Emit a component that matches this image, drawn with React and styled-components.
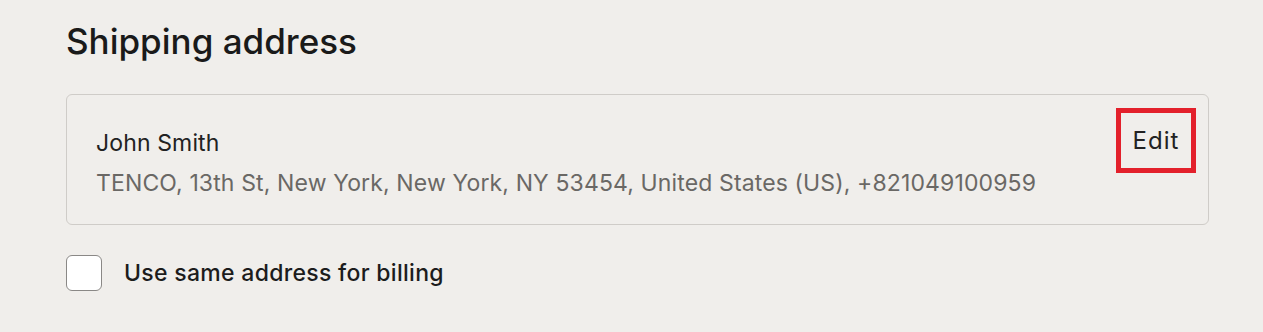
import React from 'react';
import styled, { createGlobalStyle } from 'styled-components';

const GlobalStyle = createGlobalStyle`
  body {
    margin: 0;
    background: #f0eeeb;
    font-family: Inter, "Liberation Sans", sans-serif;
    color: #1c1c1c;
  }
`;

const Section = styled.section`
  padding: 19px 54px 0 66px;
`;

const Title = styled.h2`
  margin: 0 0 31px;
  font-size: 35px;
  line-height: 44px;
  font-weight: 500;
  color: #1a1a1a;
`;

const AddressCard = styled.div`
  display: flex;
  justify-content: space-between;
  align-items: flex-start;
  padding: 34px 12px 0 29px;
  height: 95px;
  border: 1px solid #cfccc8;
  border-radius: 6px;
`;

const Info = styled.div`
  display: flex;
  flex-direction: column;
  gap: 12px;
  font-size: 23px;
  line-height: 28px;
  letter-spacing: 0.13px;
`;

const Name = styled.div`
  color: #222;
`;

const Address = styled.div`
  color: #6a6865;
`;

const EditButton = styled.button`
  margin-top: -21px;
  width: 80px;
  height: 65px;
  padding: 0;
  background: transparent;
  border: 5px solid #e3202b;
  font: inherit;
  font-size: 24px;
  letter-spacing: 1px;
  color: #222;
  cursor: pointer;
`;

const CheckRow = styled.label`
  display: flex;
  align-items: center;
  gap: 22px;
  margin-top: 30px;
  font-size: 23px;
  font-weight: 500;
  letter-spacing: 0.3px;
  color: #1c1c1c;
  cursor: pointer;
`;

const Box = styled.span`
  width: 34px;
  height: 34px;
  border: 1px solid #8a8886;
  border-radius: 6px;
  background: #fff;
`;

export default function App() {
  return (
    <>
      <GlobalStyle />
      <Section>
        <Title>Shipping address</Title>
        <AddressCard>
          <Info>
            <Name>John Smith</Name>
            <Address>
              TENCO, 13th St, New York, New York, NY 53454, United States (US), +821049100959
            </Address>
          </Info>
          <EditButton>Edit</EditButton>
        </AddressCard>
        <CheckRow>
          <Box />
          Use same address for billing
        </CheckRow>
      </Section>
    </>
  );
}
